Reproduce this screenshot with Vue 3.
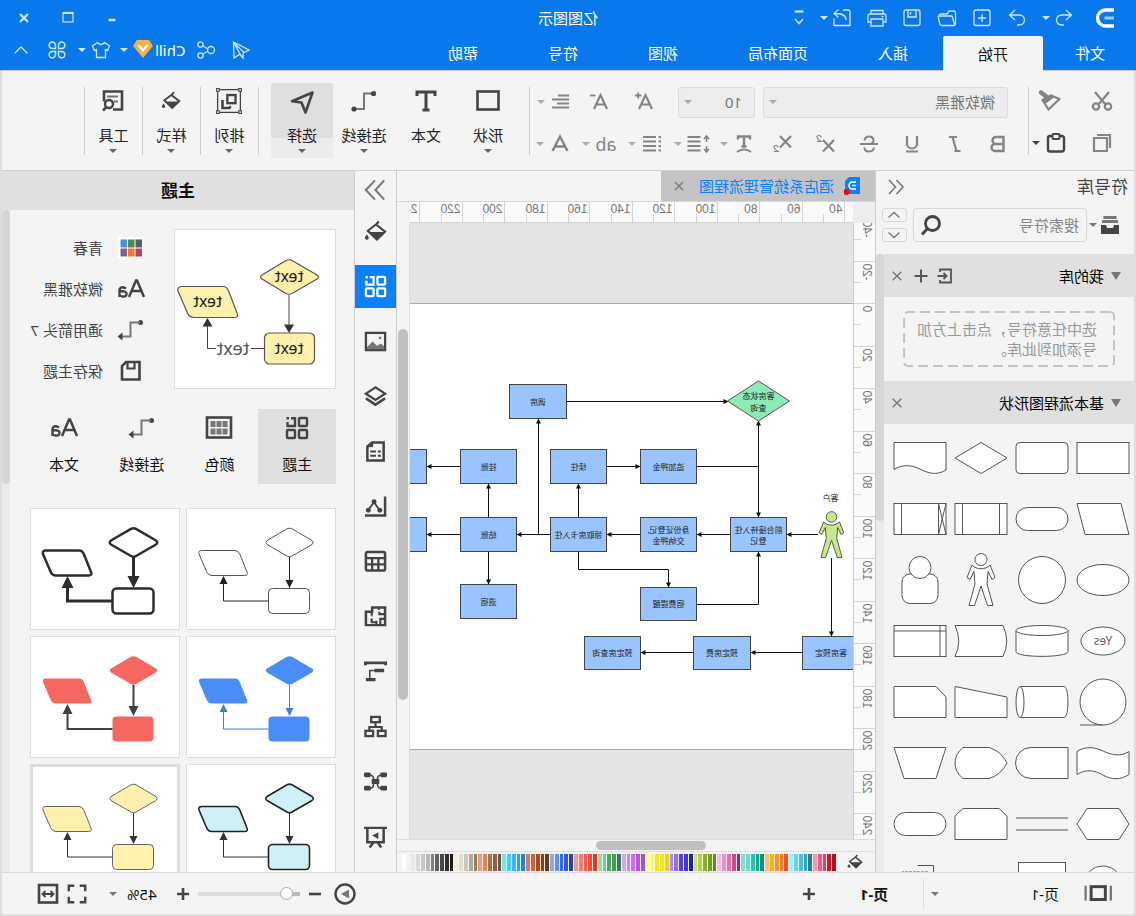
<script setup>
import { computed, h, onBeforeUnmount, onMounted, ref } from 'vue'

const paths = {
  undo: '<path d="M10 4 4.500 9l5.500 5M5 9h9.500a4.800 4.800 0 0 1 0 10H12"/>',
  redo: '<path d="M14 4l5.500 5-5.500 5M19 9H9.500a4.800 4.800 0 0 0 0 10H12"/>',
  create: '<rect x="4" y="4" width="16" height="15.500" rx="2"/><path d="M12 8v8M8 12h8"/>',
  open: '<path d="M3.500 18V7q0-2 2-2H10l2 3h6q2 0 2 2M3.500 18q0 1.500 1.500 1.500h12.500q1.300 0 1.600-1.300L20.800 11q.2-1-1-1H8Q7 10 6.500 11L5 17q-.5 1.500-1.500 1"/>',
  save: '<path d="M4 6q0-2 2-2h12q2 0 2 2v11.500q0 2-2 2H6q-2 0-2-2ZM8 4v7h8V4M13.500 6v2.500"/>',
  print: '<path d="M6 8V4.500h12V8M6 16H3V10q0-2 2-2h14q2 0 2 2v6h-3M6 13h12v7H6ZM5.500 10.500h2"/>',
  exportIcon: '<path d="M11 4H6Q4 4 4 6v13.500h16v-7M8 14c0-5 4-6.500 11-6.500M15.500 3.500l4.500 4-4.500 4"/>',
  more: '<path d="M7.500 5.500h9" stroke-width="2.200"/><path d="M8 13l4 4.500 4-4.500" stroke-width="1.600"/>',
  send: '<path d="M19.500 4 4 12l5 2.500L19 5l-6 11 6 4ZM10 15v5l3-3.500"/>',
  share: '<circle cx="7" cy="12" r="3.500"/><circle cx="17.500" cy="6.500" r="2.600"/><circle cx="17.500" cy="17.500" r="2.600"/><path d="M10 11l5-3M10 13l5 3"/>',
  shirt: '<path d="M8.500 4.500 3.500 8l2 4.500L7.500 11.500v8h9v-8l2 1 2-4.500-5-3.500q-3.500 4-7 0Z"/>',
  clover: '<path d="M10.500 10.500H7.500a3.200 3.200 0 1 1 3-3ZM13.500 10.500h3a3.200 3.200 0 1 0-3-3ZM10.500 13.500H7.500a3.200 3.200 0 1 0 3 3ZM13.500 13.500h3a3.200 3.200 0 1 1-3 3Z" stroke-width="1.500"/>',
  chevUp: '<path d="M5.500 15.500 12 9l6.500 6.500"/>',
  chevDown: '<path d="M6.500 9.500 12 14.500l5.500-5"/>',
  chevUpS: '<path d="M6.500 14.500 12 9.500l5.500 5"/>',
  min: '<path d="M8.500 14h7" stroke-width="2.500"/>',
  max: '<rect x="7" y="6.500" width="10" height="9.500" stroke-width="1.200"/><path d="M7 7h10" stroke-width="2"/>',
  close: '<path d="M8 8l8 8M16 8l-8 8"/>',
  cut: '<path d="M5 3l10.500 12.500M19 3 8.500 15.500" stroke-width="2.200"/><circle cx="6" cy="17.500" r="3.200" stroke-width="2.200"/><circle cx="18" cy="17.500" r="3.200" stroke-width="2.200"/>',
  painter: '<path d="M2.500 10 11 6.500 19.500 11 13.500 20.500Z" stroke-width="2.200" stroke-linejoin="round"/><path d="M10.500 6 19.500 11.500 16.500 14 8.500 8Z" fill="currentColor"/><path d="M21 3.500 14.500 8.500" stroke-width="4.500" stroke-linecap="round"/>',
  copy: '<path d="M7 7h13v13H7Z" stroke-width="2.200"/><path d="M4 17V4h13" stroke-width="2.200"/>',
  paste: '<rect x="4" y="5" width="16" height="15.500" rx="2" stroke-width="2.400"/><rect x="8.500" y="3" width="7" height="5" rx="1" fill="#f4f4f4" stroke-width="2"/>',
  grow: '<path d="M5 19 11.500 5 18 19M7.500 14.500h8" stroke-width="2.200"/><path d="M15.500 5.500h6.500M18.800 2.500v6" stroke-width="1.800"/>',
  shrink: '<path d="M5 19 11.500 5 18 19M7.500 14.500h8" stroke-width="2.200"/><path d="M16.500 5.500h5.500" stroke-width="1.800"/>',
  alignC: '<path d="M4 5.500h11M4 9.500h17M4 13.500h12M4 17.500h17" stroke-width="2"/>',
  bold: '<path d="M6.500 5h7.500a3.300 3.300 0 0 1 0 7H7.500h7.500a3.500 3.500 0 0 1 0 7H6.500Z" stroke-width="2.400"/>',
  italic: '<path d="M10 5h8M6.500 19h6M14.500 5l-4 14" stroke-width="2.200"/>',
  underline: '<path d="M7 4v7.500a5 5 0 0 0 10 0V4M6 19.500h12" stroke-width="2.200"/>',
  strike: '<path d="M3 12h18M16.500 8.500Q16 4.500 12 4.500T7.500 8t4.500 4M7 15.500q.5 4 5 4t4.500-4" stroke-width="2"/>',
  sup: '<path d="M4 8l11 11.500M15 8 4 19.500" stroke-width="2.200"/><path d="M17 5.500q0-2 2-2t2 1.800Q21 6.500 17 9.500h4.200" stroke-width="1.200"/>',
  sub: '<path d="M4 4l11 11.500M15 4 4 15.500" stroke-width="2.200"/><path d="M17 15.500q0-2 2-2t2 1.800q0 1.200-4 4.200h4.200" stroke-width="1.200"/>',
  textArc: '<path d="M6 7.500V4.500h12v3M12 4.500v10M9.500 14.500h5" stroke-width="2.400"/><path d="M5 20q7-5 14 0" stroke-width="2"/>',
  spacing: '<path d="M9.500 5h13M9.500 9.500h13M9.500 14h13M9.500 18.500h13" stroke-width="2.200"/><path d="M3.500 5v5M1 7l2.500-3L6 7M3.500 19v-5M1 17l2.500 3L6 17" stroke-width="1.600"/>',
  list: '<path d="M8 5h13M8 9.500h13M8 14h13M8 18.500h13" stroke-width="2.200"/><path d="M3 5h2.500M3 9.500h2.500M3 14h2.500M3 18.500h2.500" stroke-width="2.200"/>',
  fontColor: '<path d="M4.500 19 12 4.500 19.500 19M7 14.500h10" stroke-width="2.400"/>',
  square: '<rect x="1.500" y="2.500" width="21" height="18" stroke-width="2.600"/>',
  text: '<path d="M3 7V3h18v4M12 3v18M8.500 21h7" stroke-width="3"/>',
  connector: '<path d="M3 4.500h9V20H21" stroke-width="2" stroke="#777"/><circle cx="2.500" cy="4.500" r="2.600" fill="currentColor" stroke="none"/><circle cx="22" cy="20" r="2.600" fill="currentColor" stroke="none"/>',
  pointer: '<path d="M1.500 3.500 22 12.200 12.500 13.500 8.500 23.500Z" stroke-width="2.600" stroke-linejoin="round"/>',
  arrange: '<rect x="1.500" y="1.500" width="21" height="21" stroke-width="1.200"/><rect x="6" y="6.500" width="7.500" height="7.500" stroke-width="2.200"/><path d="M11 18.500h7V11" stroke-width="2.400"/><path d="M11 16.500v2.500" stroke-width="2"/><g fill="#f4f4f4" stroke-width="1"><rect x=".5" y=".5" width="2.500" height="2.500"/><rect x="21" y=".5" width="2.500" height="2.500"/><rect x=".5" y="21" width="2.500" height="2.500"/><rect x="21" y="21" width="2.500" height="2.500"/></g>',
  fill: '<path d="M8.500 1.500l3 3.200M11.500 4.700 2 12.200l8.500 8.300 9.500-9.300Z" stroke-width="2.200"/><path d="M2 12.500h17.500L10.500 21Z" fill="currentColor" stroke="none"/><path d="M21 15q2 2.500 2 3.500a2 2 0 0 1-4 0q0-1 2-3.500Z" fill="currentColor" stroke="none"/>',
  tool: '<path d="M12 20.500H3V2.500h18v10" stroke-width="2.600"/><path d="M7 7.500h11M7 12.500h4" stroke="#777" stroke-width="2"/><circle cx="16" cy="15" r="4" stroke-width="2.400"/><path d="M18.500 18 22 21.500" stroke-width="2.600"/>',
  dblLeft: '<path d="M11.500 5 5 12l6.500 7M19 5l-6.500 7L19 19" stroke-width="1.600"/>',
  dblRight: '<path d="M2 1.500 11.500 12 2 22.500M12 1.500 22 12 12 22.500" stroke-width="2.200"/>',
  library: '<path d="M5.500 4.500h13M4 8.500h16" stroke-width="3" stroke="#777"/><path d="M3 12h5l1 3h6l1-3h5v9H3Z" fill="currentColor" stroke="none"/>',
  search: '<circle cx="10.500" cy="10.500" r="7" stroke-width="2.800"/><path d="M15.500 15.500 21 21.500" stroke-width="3"/>',
  importIcon: '<path d="M17 8V5.500H6v13H17V16" stroke-width="1.800"/><path d="M19.500 12H11M13.500 9 10.500 12l3 3" stroke-width="1.800"/>',
  plus: '<path d="M12 5.500v13M5.500 12h13" stroke-width="2"/>',
  plusB: '<path d="M12 6v12M6 12h12" stroke-width="2.600"/>',
  minusB: '<path d="M6 12h12" stroke-width="2.600"/>',
  theme: '<rect x="2" y="2" width="8" height="8" rx="1" stroke-width="2.400"/><path d="M18 2.200h-4V10h7.500V6" stroke-width="2.400"/><rect x="20" y="1" width="2.500" height="2.500" fill="currentColor" stroke="none"/><rect x="2" y="14" width="8" height="8" rx="1" stroke-width="2.400"/><rect x="14" y="14" width="8" height="8" rx="1" stroke-width="2.400"/>',
  image: '<rect x="2" y="3" width="20" height="18" stroke-width="2.400"/><path d="M3 20v-3l3.500-3 4 2.500L15 12l6 6v2Z" fill="#777" stroke="none"/><rect x="6" y="7" width="2.500" height="2.500" fill="#777" stroke="none"/>',
  layers: '<path d="M12 2.500 22 9l-10 6.500L2 9Z" stroke-width="2.400"/><path d="M2 14l10 6.500L22 14" stroke-width="2.600"/>',
  page: '<path d="M3.500 2.500h12l5 4v15h-17Z" stroke-width="2.600"/><path d="M15 2.500 20.500 7H15Z" fill="currentColor" stroke-width="1"/><path d="M6.500 12h3M11.500 12h6M6.500 16.500h3M11.500 16.500h6" stroke-width="2"/>',
  chart: '<path d="M2 1.500V21.500H23" stroke-width="2.600"/><path d="M8 15.500 13.500 7.500l6 8" stroke-width="1.800"/><circle cx="7.500" cy="16" r="2.600" fill="currentColor" stroke="none"/><circle cx="13.500" cy="7" r="2.600" fill="currentColor" stroke="none"/><circle cx="19.500" cy="16" r="2.600" fill="currentColor" stroke="none"/>',
  table: '<rect x="2" y="2" width="20" height="19.500" rx="2" stroke-width="2.600"/><path d="M2 8.500h20M2 15h20M9 8.500v13M15.500 8.500v13" stroke-width="2.400"/>',
  plan: '<path d="M2 21V2.500h13.500V7H22v14Z" stroke-width="2.600"/><path d="M2 9.500h6V7M8.500 2v3M2 14.500h5v7M11 21v-4.500M16 7v4M16 11h-1M16 14v4h-4" stroke-width="2.200"/>',
  gantt: '<path d="M1.500 5.500V3h21v2.500" stroke-width="3"/><path d="M8 11h10v9" stroke-width="1.600"/><path d="M3 11h10M12 20.500h10" stroke-width="3.600"/>',
  org: '<rect x="7.500" y="2" width="9" height="5.500" stroke-width="2.400"/><rect x="1.500" y="16.500" width="8" height="5.500" stroke-width="2.400"/><rect x="14.500" y="16.500" width="8" height="5.500" stroke-width="2.400"/><path d="M12 7.500V12M5.500 16v-3.500h13V16" stroke-width="2.200"/>',
  mind: '<g fill="currentColor" stroke="none"><rect x="0" y="2.500" width="7" height="5" rx="1.500"/><rect x="17" y="2.500" width="7" height="5" rx="1.500"/><rect x="0" y="16.500" width="7" height="5" rx="1.500"/><rect x="17" y="16.500" width="7" height="5" rx="1.500"/><rect x="8" y="9.500" width="8" height="5" rx="1"/></g><path d="M6 5.500q4 0 4 4v5q0 4.500-4 4.500M18 5.500q-4 0-4 4v5q0 4.500 4 4.500" stroke-width="1.600"/>',
  present: '<path d="M0 3h24M3.500 4v14h17V4M9.500 18.500 6 23.500M14.500 18.500l3.500 5" stroke-width="2.600"/><path d="M9 7.500l6.500 3.500L9 14.500Z" fill="currentColor" stroke="none"/>',
  aa: '<path d="M-1 20 6 3.500h1L14 20M2 14h9" stroke-width="2.500"/><path d="M17 11.500q5-3 6.500 1V20M23.500 14.500q-7.500-1-7 3 .5 2.500 4 2t3-3" stroke-width="2.400"/>',
  elbow: '<circle cx="2.500" cy="4.500" r="2.500" fill="currentColor" stroke="none"/><path d="M3 4.500h9.500V18.500H21" stroke="#777" stroke-width="2"/><path d="M20.500 14.500l5 4-5 4Z" fill="currentColor" stroke="none"/>',
  disk: '<path d="M3.500 3H17l4 4v13.500H3.500Z" stroke-width="2.600"/><path d="M8.500 3v6.500h7V3" stroke-width="2.200"/>',
  palette: '<rect x="0" y="1.500" width="24" height="20" fill="none" stroke-width="2.600"/><g fill="#777" stroke="none"><rect x="3.500" y="5" width="5" height="6"/><rect x="9.500" y="5" width="5" height="6"/><rect x="15.500" y="5" width="5" height="6"/><rect x="3.500" y="12.500" width="5" height="6"/><rect x="9.500" y="12.500" width="5" height="6"/><rect x="15.500" y="12.500" width="5" height="6"/></g>',
  swatch: '<rect x="-1" y="1" width="26" height="21" fill="#fff" stroke="none"/><g stroke="none"><rect x="1" y="3.500" width="6.500" height="8" fill="#565f62"/><rect x="8.500" y="3.500" width="6.500" height="8" fill="#508a57"/><rect x="16" y="3.500" width="6.500" height="8" fill="#4a90e2"/><rect x="1" y="12.500" width="6.500" height="8" fill="#b73e63"/><rect x="8.500" y="12.500" width="6.500" height="8" fill="#f5772b"/><rect x="16" y="12.500" width="6.500" height="8" fill="#7d6088"/></g>',
  pages: '<rect x="4" y="4" width="15.500" height="14" stroke-width="3.200"/><path d="M-2 3v16M25.500 3v16" stroke="#777" stroke-width="2.500"/>',
  play: '<circle cx="12" cy="12" r="9.500" stroke-width="2.400"/><path d="M8 12l8-4.500v9Z" transform="matrix(-1 0 0 1 24 0)" fill="#777" stroke="none"/>',
  full: '<path d="M3 9V3H9M15 3h6V9M21 15v6H15M9 21H3V15" stroke-width="2.600"/>',
  fit: '<rect x="3" y="3" width="18" height="17.500" stroke-width="2.600"/><path d="M7 12h10M9.500 9 6.500 12l3 3M14.500 9l3 3-3 3" stroke-width="1.800"/>'
}

const Icon = (props) =>
  h('svg', {
    viewBox: '0 0 24 24',
    width: props.size || 24,
    height: props.size || 24,
    fill: 'none',
    stroke: 'currentColor',
    'stroke-width': 1.3,
    'aria-hidden': 'true',
    class: 'icon',
    innerHTML: paths[props.name]
  })
Icon.props = ['name', 'size']

const menuTabs = ['文件', '开始', '插入', '页面布局', '视图', '符号', '帮助']
const plainFormats = [
  ['bold', '加粗'], ['italic', '斜体'], ['underline', '下划线'],
  ['strike', '删除线'], ['sup', '上标'], ['sub', '下标']
]
const bigTools = [
  { label: '形状', icon: 'square', caret: true },
  { label: '文本', icon: 'text', caret: false },
  { label: '连接线', icon: 'connector', caret: true },
  { label: '选择', icon: 'pointer', caret: true, on: true }
]
const sideTools = [
  { label: '排列', icon: 'arrange', size: 26 },
  { label: '样式', icon: 'fill', size: 20 },
  { label: '工具', icon: 'tool', size: 24 }
]
const rail = ['fill', 'theme', 'image', 'layers', 'page', 'chart', 'table', 'plan', 'gantt', 'org', 'mind', 'present']

const person = '<circle cx="0" cy="-20.500" r="6"/><path d="M-9-15-14-2.500-11-.5-7-8.500-6 4-12 25.500H-6.500L0 6 6.500 25.500H12L6 4 7-8.500 11-.5 14-2.500 9-15C5-10-5-10-9-15Z"/>'
const R = '<rect x="-26" y="-15.500" width="52" height="31"/>'
const pill = '<rect x="-26" y="-11.500" width="52" height="23" rx="11.500"/>'
const symbols = [
  R,
  '<rect x="-26" y="-15.500" width="52" height="31" rx="4"/>',
  '<path d="M0-15.500 26 0 0 15.500-26 0Z"/>',
  '<path d="M-26-15.500H26V11.500C18 6 8 7 0 11S-16 18-26 12Z"/>',
  '<path d="M-18-15.500H26L18 15.500H-26Z"/>',
  pill,
  R + '<path d="M-18.500-15.500v31M18.500-15.500v31"/>',
  R + '<path d="M-18.500-15.500v31M18.500-15.500v31M-26-15.500l7.500 31M-18.500-15.500l-7.500 31"/>',
  '<ellipse rx="26" ry="15.500"/>',
  '<circle r="23.500"/>',
  person,
  '<rect x="-18" y="-6" width="36" height="29.500" rx="8"/><circle cy="-12.500" r="11"/>',
  '<ellipse rx="22" ry="14"/>',
  '<path d="M-26-10.500V10.500C-26 17 26 17 26 10.500V-10.500"/><ellipse cy="-10.500" rx="26" ry="5"/>',
  '<path d="M-22-15.500H26Q18.500 0 26 15.500H-22Q-29.500 0-22-15.500Z"/>',
  R + '<path d="M-20-15.500v31M-26-10H26"/>',
  '<circle r="23"/><path d="M0 23H23"/>',
  '<path d="M22-15.500H-22C-27.300-15.500-27.300 15.500-22 15.500H22"/><ellipse cx="22" rx="4" ry="15.500"/>',
  '<path d="M-26-5 26-15.500V15.500H-26Z"/>',
  '<path d="M-16-15.500H26V15.500H-26V-5Z"/>',
  '<path d="M-26-11.500C-18-6-8-8 0-12S18-17 26-11.500V11.500C18 6 8 7 0 12S-18 17-26 11.500Z"/>',
  '<path d="M-26-15.500H11a15.500 15.500 0 0 1 0 31H-26Z"/>',
  '<path d="M-8-15.500H18Q26-9 26 0T18 15.500H-8Q-20 12-26 0-20-12-8-15.500Z"/>',
  '<path d="M-26-15.500H26L16 15.500H-16Z"/>',
  '<path d="M-16-15.500H16L26 0 16 15.500H-16L-26 0Z"/>',
  '<path d="M-26-6H26M-26 6H26"/>',
  '<path d="M-18-15.500H18L26-8V15.500H-26V-8Z"/>',
  pill,
  '<circle r="19"/>',
  '<rect x="-23.500" y="-22.500" width="47" height="40"/>',
  '',
  '<path d="M2.500-19.500H-13.500V0" fill="none"/><path d="M-8-13.500H18" fill="none" stroke-dasharray="3 1" opacity=".5"/>'
]

const view = ref({ w: window.innerWidth, h: window.innerHeight })
const measure = () => { view.value = { w: window.innerWidth, h: window.innerHeight } }
onMounted(() => window.addEventListener('resize', measure))
onBeforeUnmount(() => window.removeEventListener('resize', measure))

const ticks = (count, first, start) =>
  Array.from({ length: Math.max(0, count) }, (_, i) => ({ v: first + 20 * i, p: Math.round(start + 42.5 * i) + 0.5 }))
const hTicks = computed(() => ticks(Math.ceil((view.value.w - 700) / 42.5), 40, 7.5))
const vTicks = computed(() => ticks(Math.ceil((view.value.h - 300) / 42.5), -40, -5))

const nodes = [
  { x: 569.5, y: 384.5, w: 57, h: 34, t: ['调房'] },
  { x: 439.5, y: 449.5, w: 56, h: 34, t: ['追加押金'] },
  { x: 529.5, y: 449.5, w: 56, h: 34, t: ['续住'] },
  { x: 619.5, y: 449.5, w: 56, h: 34, t: ['挂账'] },
  { x: 709.5, y: 449.5, w: 56, h: 34, t: ['应收款'] },
  { x: 349.5, y: 517.5, w: 56, h: 34, t: ['前台接待入住', '登记'] },
  { x: 439.5, y: 517.5, w: 56, h: 34, t: ['身份证登记,', '交纳押金'] },
  { x: 529.5, y: 517.5, w: 56, h: 34, t: ['领取房卡入住'] },
  { x: 619.5, y: 517.5, w: 56, h: 34, t: ['结账'] },
  { x: 709.5, y: 517.5, w: 56, h: 34, t: [] },
  { x: 619.5, y: 584.5, w: 56, h: 34, t: ['退宿'] },
  { x: 439.5, y: 587.5, w: 56, h: 33, t: ['宿费提醒'] },
  { x: 276.5, y: 636.5, w: 57, h: 33, t: ['客房预定'] },
  { x: 385.5, y: 636.5, w: 57, h: 33, t: ['预定房费'] },
  { x: 495.5, y: 636.5, w: 56, h: 33, t: ['预定房查询'] }
]
const links = [
  'M569.500 401.500H408', 'M377.500 500V421', 'M377.500 440V517', 'M529.500 466.500H496',
  'M557.500 517V484', 'M585.500 534.500H619', 'M597.500 534.500V419', 'M405.500 534.500H439',
  'M495.500 534.500H529', 'M318 534.500H349', 'M647.500 517V484', 'M647.500 552V584',
  'M675.500 466.500H709', 'M675.500 534.500H709', 'M557.500 552V569.500H467.500V587',
  'M439.500 604.500H377.500V552', 'M304.500 558V636', 'M333.500 652.500H385', 'M442.500 652.500H495'
]

const themes = [
  { f: '#fff', s: '#555', w: 1, l: '#222', lw: 1, a: 4 },
  { f: '#fff', s: '#2d2d2d', w: 2.5, l: '#2d2d2d', lw: 3, a: 6 },
  { f: '#4a8df8', s: '#4a8df8', w: 0, l: '#3f7de0', lw: 1, a: 4 },
  { f: '#f5675f', s: '#f5675f', w: 0, l: '#404040', lw: 2, a: 5 },
  { f: '#cff0f6', s: '#222', w: 1.6, l: '#333', lw: 1, a: 4 },
  { f: '#fff0ad', s: '#666', w: 1, l: '#333', lw: 1, a: 4, on: true }
]
const themeTabs = [['theme', '主题'], ['palette', '颜色'], ['elbow', '连接线'], ['aa', '文本']]
const themeProps = [['swatch', '青春'], ['aa', '微软雅黑'], ['elbow', '通用箭头 7'], ['disk', '保存主题']]

const colors = (
  'b01022 d6102c ef3a5c f7577f f995ab 24808f 37a5bb 3cc3dc 5cd8ee a8eefa f4511e ff7a28 ff9020 ffb010 ffc468 ' +
  '0d9080 12a88c 1bcaae 66ddc8 7ee0d0 9e2a5c c94a8c e96aaf fa88d0 f0c0dc 5c8c10 74a020 88b020 b4d048 cfe080 ' +
  '2020b0 4038d8 6038f0 8c70f8 a890f8 ffcc00 ffe010 f0e820 ffff40 ffff80 a050e0 c050e8 d068f8 c088ff dca0ff ' +
  '348048 40a050 4caa60 78c890 98d8a8 f03020 ff4838 ff5850 ff7870 ff9488 2048a8 3058e0 2e6cf8 6090ff 80aaff ' +
  '783800 983c00 b04820 d06040 e07858 1888d8 28a0f8 40b0ff 38d0ff 68e8ff 785038 946040 b07050 d88860 f89870 ' +
  '888070 b0a890 ccc8b8 e4dccc f4eedc 181818 303030 484848 606060 808080 b8b8b8 c8c8c8 d8d8d8 e8e8e8 f2f2f2 ffffff'
).split(' ')

const zoom = ref(8)
const query = ref('')
</script>

<template>
  <div class="app">
    <header>
      <div class="titlebar">
        <div class="quick">
          <svg class="logo" viewBox="0 0 20 20" width="20" height="20"><path d="M1 2H10a8 8 0 0 0 0 16H19" transform="matrix(-1 0 0 1 20 0)" fill="none" stroke="none" /><path d="M1 2H9.500a8 8 0 0 1 0 16H1" fill="none" stroke="#fff" stroke-width="3.400" /><path d="M1 10H10.500" stroke="#9ccafc" stroke-width="3" /></svg>
          <button aria-label="撤销"><Icon name="undo" /></button>
          <span class="caret"></span>
          <button aria-label="重做"><Icon name="redo" /></button>
          <button aria-label="新建"><Icon name="create" /></button>
          <button aria-label="打开"><Icon name="open" /></button>
          <button aria-label="保存"><Icon name="save" /></button>
          <button aria-label="打印"><Icon name="print" /></button>
          <button aria-label="导出"><Icon name="exportIcon" /></button>
          <span class="caret"></span>
          <button class="narrow" aria-label="更多"><Icon name="more" /></button>
        </div>
        <h1>亿图图示</h1>
        <div class="win">
          <button aria-label="最小化"><Icon name="min" /></button>
          <button aria-label="最大化"><Icon name="max" /></button>
          <button class="x" aria-label="关闭"><Icon name="close" /></button>
        </div>
      </div>
      <div class="menubar">
        <nav>
          <button v-for="t in menuTabs" :key="t" :class="{ on: t === '开始' }">{{ t }}</button>
        </nav>
        <div class="account">
          <button aria-label="发送"><Icon name="send" /></button>
          <button class="gap" aria-label="分享"><Icon name="share" /></button>
          <span class="user">Chill</span>
          <svg class="vip" viewBox="0 0 20 18" width="20" height="18"><path d="M4 0h12l4 6-10 12L0 6Z" fill="#f7b140" /><path d="M5.500 5 10 10.500 14.500 5" fill="none" stroke="#fff" stroke-width="2.200" /></svg>
          <span class="caret"></span>
          <button class="skin" aria-label="皮肤"><Icon name="shirt" /></button>
          <span class="caret near"></span>
          <button class="apps" aria-label="应用"><Icon name="clover" /></button>
          <button class="fold" aria-label="折叠"><Icon name="chevUp" /></button>
        </div>
      </div>
    </header>

    <div class="body">
      <section class="ribbon">
        <div class="clip">
          <button class="g" aria-label="剪切"><Icon name="cut" /></button>
          <button class="g" aria-label="格式刷"><Icon name="painter" /></button>
          <button class="g" aria-label="复制"><Icon name="copy" /></button>
          <button class="pasteb" aria-label="粘贴"><Icon name="paste" /><span class="caret"></span></button>
        </div>
        <i class="sep"></i>
        <div class="font">
          <div class="row one">
            <label class="box family"><select aria-label="字体"><option>微软雅黑</option></select><span class="caret"></span></label>
            <label class="box size"><select aria-label="字号"><option>10</option></select><span class="caret"></span></label>
            <button aria-label="增大字号"><Icon name="grow" /></button>
            <button aria-label="减小字号"><Icon name="shrink" /></button>
            <button class="pair last" aria-label="对齐"><Icon name="alignC" /><span class="caret"></span></button>
          </div>
          <div class="row two">
            <button v-for="f in plainFormats" :key="f[0]" :aria-label="f[1]"><Icon :name="f[0]" /></button>
            <button class="pair first" aria-label="文字效果"><Icon name="textArc" /><span class="caret"></span></button>
            <button class="pair" aria-label="行距"><Icon name="spacing" /><span class="caret"></span></button>
            <button class="pair" aria-label="项目符号"><Icon name="list" /><span class="caret"></span></button>
            <button class="pair"><span class="ab">ab</span><span class="caret"></span></button>
            <button class="pair" aria-label="字体颜色"><Icon name="fontColor" /><span class="caret"></span></button>
          </div>
        </div>
        <i class="sep"></i>
        <div class="bigs">
          <button v-for="b in bigTools" :key="b.label" class="big" :class="{ on: b.on }">
            <span class="pic"><Icon :name="b.icon" size="24" /></span>
            <span>{{ b.label }}</span>
            <span v-if="b.caret" class="caret"></span>
          </button>
        </div>
        <i class="sep"></i>
        <template v-for="b in sideTools" :key="b.label">
          <button class="big slim">
            <span class="pic"><Icon :name="b.icon" :size="b.size" /></span>
            <span>{{ b.label }}</span>
            <span class="caret"></span>
          </button>
          <i class="sep"></i>
        </template>
      </section>

      <main>
        <aside class="library">
          <div class="libhead"><h2>符号库</h2><button aria-label="收起"><Icon name="dblLeft" /></button></div>
          <div class="find">
            <button class="lib" aria-label="符号库菜单"><Icon name="library" /><span class="caret"></span></button>
            <label class="search"><input v-model="query" type="text" placeholder="搜索符号" aria-label="搜索符号"><Icon name="search" /></label>
            <div class="steps">
              <button aria-label="上一个"><Icon name="chevUpS" /></button>
              <button aria-label="下一个"><Icon name="chevDown" /></button>
            </div>
          </div>
          <div class="libbody">
            <div class="libscroll">
              <div class="sec"><b class="tri"></b><h3>我的库</h3>
                <button aria-label="导入"><Icon name="importIcon" /></button>
                <button aria-label="添加"><Icon name="plus" /></button>
                <button class="dim" aria-label="关闭我的库"><Icon name="close" size="26" /></button>
              </div>
              <div class="drop">
                <svg class="dash" width="100%" height="100%"><rect x="1" y="1" width="99%" height="54" rx="4" fill="none" stroke="#c4c4c4" stroke-width="2" stroke-dasharray="10 5" /></svg>
                <p>选中任意符号，点击上方加号添加到此库。</p>
              </div>
              <div class="sec"><b class="tri"></b><h3>基本流程图形状</h3>
                <button class="dim" aria-label="关闭基本流程图形状"><Icon name="close" size="26" /></button>
              </div>
              <div class="shapes">
                <svg v-for="(s, i) in symbols" :key="i" viewBox="-30 -30 61 61" width="61" height="61" fill="#fff" stroke="#555" stroke-width="1">
                  <g v-html="s"></g>
                  <text v-if="i === 12" y="4" text-anchor="middle" class="yes">Yes</text>
                </svg>
              </div>
            </div>
            <div class="track"><i></i></div>
          </div>
        </aside>

        <section class="center">
          <div class="doctabs">
            <div class="doctab">
              <svg viewBox="0 0 16 20" width="16" height="20"><path d="M0 1h11l4 4v13H0Z" fill="#0a80ff" /><path d="M4 6h3.500a3.500 3.500 0 0 1 0 7H4M4 9.500h4" fill="none" stroke="#fff" stroke-width="1.600" /><circle cx="13.500" cy="16" r="3" fill="#f00" /></svg>
              <span>酒店系统管理流程图</span>
              <button aria-label="关闭文档"><Icon name="close" /></button>
            </div>
          </div>
          <div class="work">
            <div class="corner"></div>
            <svg class="hruler" width="100%" height="21">
              <g v-for="t in hTicks" :key="t.v">
                <path :d="`M${t.p} 0V20M${t.p + 21} 12V20`" stroke="#d4d4d4" />
                <text :x="t.p + 2" y="11">{{ t.v }}</text>
              </g>
            </svg>
            <div class="blank"></div>
            <svg class="vruler" width="22" height="100%">
              <g v-for="t in vTicks" :key="t.v">
                <path :d="`M0 ${t.p}H22M14 ${t.p + 21}H22`" stroke="#d4d4d4" />
                <text :transform="`translate(12 ${t.p + 2}) rotate(-90)`" text-anchor="end">{{ t.v }}</text>
              </g>
            </svg>
            <div class="canvas">
              <div class="paper">
                <svg class="chart" viewBox="283 304 443 445" width="443" height="445">
                  <defs><marker id="tip" viewBox="0 0 6 6" refX="5.500" refY="3" markerWidth="6" markerHeight="6" orient="auto"><path d="M1 .5 6 3 1 5.500Z" fill="#111" /></marker></defs>
                  <path v-for="l in links" :key="l" :d="l" fill="none" stroke="#111" marker-end="url(#tip)" />
                  <path d="M439.500 466.500H377.500M377.500 430V500" stroke="#111" fill="none" />
                  <g v-for="(n, i) in nodes" :key="i">
                    <rect :x="n.x" :y="n.y" :width="n.w" :height="n.h" fill="#99c4ff" stroke="#444" />
                    <text v-for="(s, k) in n.t" :key="k" :x="n.x + n.w / 2" :y="n.y + n.h / 2 + 3 + (k * 11) - (n.t.length - 1) * 5" text-anchor="middle">{{ s }}</text>
                  </g>
                  <path d="M377.500 381 408.500 401 377.500 421 346.500 401Z" fill="#8debb8" stroke="#555" />
                  <text x="377.500" y="399" text-anchor="middle">客房状态</text>
                  <text x="377.500" y="411" text-anchor="middle">查询</text>
                  <g transform="translate(304.500 535) scale(.88)" fill="#c5e88a" stroke="#444" v-html="person"></g>
                  <text x="305.500" y="501" text-anchor="middle">客户</text>
                </svg>
              </div>
            </div>
            <div class="vbar"><i></i></div>
          </div>
          <div class="hbar"><i></i></div>
          <div class="strip">
            <Icon name="fill" size="16" />
            <div class="cells"><button v-for="c in colors" :key="c" :aria-label="c" :style="{ background: '#' + c }"></button></div>
          </div>
        </section>

        <div class="rail">
          <button class="fold" aria-label="展开"><Icon name="dblRight" size="22" /></button>
          <button v-for="r in rail" :key="r" :class="{ on: r === 'theme' }" :aria-label="r"><Icon :name="r" size="23" /></button>
        </div>

        <aside class="themes">
          <h2>主题</h2>
          <div class="tbody">
            <div class="tscroll">
              <div class="top">
                <svg class="preview" viewBox="0 0 160 158" width="160" height="158">
                  <g fill="#fff0ad" stroke="#555" stroke-width="1.200" stroke-linejoin="round">
                    <path d="M43 30.500Q46 29 49 30.500L73 45Q76 47 73 49L49 63.500Q46 65 43 63.500L18 49Q15 47 18 45Z" />
                    <path d="M112 56.500H153Q158 56.500 157 61L148 82Q146 87.500 141 87.500H100Q96 87.500 98 83L106 62Q108 56.500 112 56.500Z" />
                    <rect x="20.500" y="103" width="50" height="31" rx="5" />
                  </g>
                  <path d="M46 65V98M71 118.500H84M119 118.500H127.500V94" fill="none" stroke="#444" />
                  <path d="M46 103l-5-8.500h10ZM127.500 88l-5 8.500h10Z" fill="#333" />
                  <g text-anchor="middle" class="t1"><text x="46" y="52">text</text><text x="127.500" y="77">text</text><text x="46" y="124">text</text></g>
                  <text x="102" y="125" text-anchor="middle" class="t2">text</text>
                </svg>
                <div class="props">
                  <button v-for="p in themeProps" :key="p[1]"><Icon :name="p[0]" size="24" /><span>{{ p[1] }}</span></button>
                </div>
              </div>
              <div class="ttabs">
                <button v-for="(p, i) in themeTabs" :key="p[1]" :class="{ on: i === 0 }"><Icon :name="p[0]" size="24" /><span>{{ p[1] }}</span></button>
              </div>
              <div class="cards">
                <button v-for="(c, i) in themes" :key="i" :class="{ on: c.on }" :aria-label="'主题 ' + (i + 1)">
                  <svg viewBox="0 0 150 122" width="150" height="122">
                    <g :fill="c.f" :stroke="c.s" :stroke-width="c.w" stroke-linejoin="round">
                      <path d="M44 20.800Q46.500 19.500 49 20.800L69 32.500Q71.500 34.500 69 36.500L49 48Q46.500 49.500 44 48L24 36.500Q21.500 34.500 24 32.500Z" />
                      <path d="M101 42.500H134Q138 42.500 137 46L129.500 63.500Q128 67.500 124 67.500H91.500Q87.500 67.500 89 64L96 46.500Q97.500 42.500 101 42.500Z" />
                      <rect x="26.500" y="80.500" width="41" height="25" rx="4" />
                    </g>
                    <path :d="`M46.500 49V${80 - c.a}M67.500 93H112.500V${68 + c.a}`" fill="none" :stroke="c.l" :stroke-width="c.lw" />
                    <path :d="`M46.500 80l${-c.a} ${-c.a * 2}h${c.a * 2}ZM112.500 68l${-c.a} ${c.a * 2}h${c.a * 2}Z`" :fill="c.l" />
                  </svg>
                </button>
              </div>
            </div>
            <div class="track"><i></i></div>
          </div>
        </aside>
      </main>

      <footer>
        <button class="pg" aria-label="页面缩略图"><Icon name="pages" size="22" /></button>
        <button class="pagesel">页-1<span class="caret"></span></button>
        <i class="vsep"></i>
        <button class="cur">页-1</button>
        <button aria-label="新增页面"><Icon name="plusB" /></button>
        <div class="zoombar">
          <button aria-label="播放"><Icon name="play" /></button>
          <button aria-label="缩小"><Icon name="minusB" /></button>
          <input v-model="zoom" type="range" min="0" max="100" aria-label="缩放">
          <button aria-label="放大"><Icon name="plusB" /></button>
          <button class="pct">45%<span class="caret"></span></button>
          <button aria-label="全屏"><Icon name="full" size="22" /></button>
          <button aria-label="适应宽度"><Icon name="fit" /></button>
        </div>
      </footer>
    </div>
  </div>
</template>

<style>
body { margin: 0; overflow: hidden; }
</style>

<style scoped>
.app {
  height: 100vh; display: flex; flex-direction: column; transform: scaleX(-1);
  font: 15px/20px "Noto Sans", "Noto Sans CJK SC", sans-serif; color: #222; background: #f4f4f4; overflow: hidden;
}
.app * { box-sizing: border-box; }
.icon { display: block; flex: none; overflow: visible; }
button { border: 0; padding: 0; margin: 0; background: none; font: inherit; color: inherit; display: flex; align-items: center; justify-content: center; flex: none; }
h1, h2, h3, p { margin: 0; font-size: 15px; font-weight: 400; }
.caret { width: 10px; height: 4px; flex: none; display: flex; justify-content: center; }
.caret::before { content: ""; border: 4px solid transparent; border-top-color: currentColor; border-bottom: 0; }

header { flex: none; background: #0a78ed; color: #cfe5fd; }
.titlebar { height: 35px; display: grid; grid-template-columns: 1fr auto 1fr; align-items: center; }
.titlebar h1 { color: #fff; }
.quick { display: flex; align-items: center; gap: 13px; padding-left: 21px; }
.quick button { width: 22px; height: 24px; }
.quick .logo { margin-right: 7px; }
.quick .caret { margin-left: -11px; }
.quick .narrow { width: 14px; }
.win { display: flex; justify-content: flex-end; padding-right: 2px; }
.win button { width: 44px; height: 32px; }
.win .x svg { stroke-width: 2.2; }
.menubar { height: 36px; display: flex; justify-content: space-between; align-items: flex-end; border-bottom: 1px solid #ccc; }
nav { display: flex; color: #fff; }
nav button { padding: 0 35px; height: 34px; }
nav button:first-child { padding: 0 32px 0 31px; }
nav .on { background: #f4f4f4; color: #111; height: 35px; margin-bottom: -1px; border-radius: 2px 2px 0 0; }
.account { display: flex; align-items: center; padding: 0 10px 8px 0; }
.account button { width: 22px; }
.account .gap { margin-left: 13px; }
.user { margin-left: 10px; color: #fff; }
.vip { margin: 0 4px 2px 2px; }
.account .skin { margin-left: 7px; }
.account .near { margin-left: 3px; }
.account .apps { margin-left: 9px; }
.account .fold { margin-left: 14px; }

.body { flex: 1; min-height: 0; display: flex; flex-direction: column; border: solid #dedede; border-width: 0 2px 2px; }
.ribbon { flex: none; height: 100px; display: flex; border-bottom: 1px solid #d0d0d0; color: #848484; }
.clip { display: grid; grid-template: 42px 42px / 40px 43px; column-gap: 10px; padding: 8px 0 0 12px; }
.clip button { padding-top: 2px; }
.clip .pasteb { justify-content: flex-start; padding-left: 4px; gap: 3px; color: #444; }
.sep { width: 1px; height: 68px; margin-top: 16px; background: #ccc; flex: none; }
.font { padding: 10px 5px 0 18px; }
.row { display: flex; height: 42px; align-items: center; }
.row button { width: 24px; }
.one { padding-left: 2px; }
.one button { margin-left: 21px; }
.row .pair { width: 37px; gap: 3px; margin-left: 9px; justify-content: flex-start; }
.row .pair .caret, .box .caret { color: #aaa; }
.row .last { margin-left: 15px; }
.two button { margin-right: 19px; }
.two .pair { margin-right: 0; }
.two .first { margin-left: -4px; }
.ab { width: 24px; font-size: 18px; }
.box { display: flex; align-items: center; border: 1px solid #dcdcdc; border-radius: 3px; background: #ededed; height: 31px; padding: 0 4px 0 12px; }
.box select { flex: 1; min-width: 0; appearance: none; border: 0; background: none; font: inherit; color: #777; padding: 0; }
.family { width: 245px; margin-right: 8px; }
.size { width: 77px; }
.bigs { display: flex; padding: 0 12px 0 10px; }
.big { width: 62px; height: 75px; margin-top: 12px; flex-direction: column; justify-content: flex-start; color: #222; border-radius: 2px; }
.big.slim { width: 57px; }
.big.on { background: linear-gradient(#dfdfdf 55px, #ececec 55px); }
.pic { height: 34px; display: flex; align-items: center; color: #444; margin: 1px 0 7px; }
.big .caret { color: #666; margin-top: 4px; }

main { flex: 1; min-height: 0; display: flex; }
.library { width: 259px; flex: none; border-right: 1px solid #ccc; display: flex; flex-direction: column; min-height: 0; }
.libhead { height: 32px; display: flex; align-items: center; justify-content: space-between; padding: 0 8px 0 6px; color: #777; }
.libhead h2 { font-size: 17px; color: #444; }
.find { height: 51px; display: flex; align-items: flex-start; padding: 5px 6px 0 12px; color: #444; }
.lib { height: 34px; width: 35px; justify-content: flex-start; }
.lib .caret { color: #777; }
.search { flex: 1; min-width: 0; height: 34px; border: 1px solid #d8d8d8; border-radius: 3px; display: flex; align-items: center; padding: 0 5px 0 7px; margin-right: 6px; }
.search input { flex: 1; min-width: 0; border: 0; outline: 0; background: none; font: inherit; padding: 0; color: #444; }
.search input::placeholder { color: #888; }
.steps { display: grid; gap: 6px; }
.steps button { width: 25px; height: 14px; border: 1px solid #d8d8d8; border-radius: 3px; color: #777; }
.libbody, .tbody { flex: 1; min-height: 0; display: flex; }
.libscroll, .tscroll { flex: 1; min-width: 0; overflow: hidden; }
.track { width: 8px; background: #ebebeb; flex: none; }
.track i { display: block; height: 267px; background: #d6d6d6; border-radius: 4px; }
.sec { height: 43px; background: #e0e0e0; display: flex; align-items: center; padding: 0 1px 0 13px; color: #555; }
.sec button { width: 24px; }
.sec .dim { color: #777; }
.sec h3 { flex: 1; color: #000; }
.tri { border: 5px solid transparent; border-top: 8px solid #777; border-bottom: 0; margin-right: 7px; }
.drop { margin: 14px 19px; height: 56px; display: grid; }
.drop > * { grid-area: 1 / 1; }
.drop p { padding: 8px 12px 0 18px; color: #999; width: 212px; }
.shapes { display: grid; grid-template-columns: repeat(4, 61px); padding: 4px 0 0 1px; }
.yes { font-size: 12px; fill: #666; stroke: none; }

.center { flex: 1; min-width: 0; display: flex; flex-direction: column; }
.doctabs { height: 31px; border-bottom: 1px solid #d8d8d8; flex: none; }
.doctab { width: 214px; height: 30px; background: #c4c4c4; display: flex; align-items: center; padding: 0 6px 0 15px; color: #0a80ff; }
.doctab span { margin: 0 auto 0 10px; }
.doctab button { color: #777; }
.work { flex: 1; min-height: 0; display: grid; grid-template: 21px 1fr / 22px 1fr 13px; }
.corner { background: #ededed; }
.hruler, .vruler { display: block; background: #fafafa; overflow: hidden; }
.hruler { border-bottom: 1px solid #d4d4d4; }
.vruler { border-right: 1px solid #ccc; }
.hruler text, .vruler text { font-family: "Liberation Sans", sans-serif; font-size: 12px; fill: #777; }
.canvas { background: #e4e4e4; padding-top: 80px; overflow: hidden; min-width: 0; min-height: 0; }
.paper { background: #fff; border: solid #aaa; border-width: 1px 0; height: 447px; overflow: hidden; }
.chart { display: block; font-size: 8px; }
.chart text { fill: #222; }
.vbar { border-left: 1px solid #ddd; padding: 106px 1px 0; min-height: 0; overflow: hidden; }
.vbar i { display: block; width: 10px; height: 371px; border-radius: 5px; background: #c0c0c0; }
.hbar { height: 12px; flex: none; border-top: 1px solid #ddd; padding: 1px 0 0 169px; }
.hbar i { display: block; width: 110px; height: 9px; border-radius: 5px; background: #c0c0c0; }
.strip { height: 21px; flex: none; border-top: 1px solid #ddd; display: flex; align-items: center; padding: 0 5px 0 12px; color: #444; }
.cells { flex: 1; height: 17px; margin-left: 11px; display: flex; gap: 1px; }
.cells button { flex: 1; min-width: 0; }

.rail { width: 43px; flex: none; border: solid #ccc; border-width: 0 1px; display: flex; flex-direction: column; gap: 12px; color: #444; overflow: hidden; }
.rail button { height: 43px; }
.rail .fold { height: 38px; margin-bottom: -11px; color: #777; }
.rail .on { background: #0a80ff; color: #fff; }

.themes { width: 352px; flex: none; display: flex; flex-direction: column; min-height: 0; }
.themes h2 { height: 39px; background: #e0e0e0; font-size: 17px; font-weight: 700; color: #111; display: grid; place-items: center; flex: none; }
.tscroll { padding: 19px 15px 0 18px; }
.tbody .track i { height: 274px; }
.top { display: flex; gap: 31px; height: 160px; }
.preview { background: #fff; border: 1px solid #ddd; box-sizing: content-box; flex: none; }
.t1 { font-size: 16px; fill: #222; }
.t2 { font-size: 18px; fill: #555; }
.props { display: flex; flex-direction: column; margin-top: -2px; }
.props button { height: 41px; gap: 16px; justify-content: flex-start; color: #444; }
.ttabs { display: grid; grid-template-columns: repeat(4, 1fr); margin-top: 20px; }
.ttabs button { height: 75px; flex-direction: column; gap: 14px; padding-bottom: 3px; color: #444; }
.ttabs span { color: #111; }
.ttabs .on { background: #dfdfdf; }
.cards { display: grid; grid-template-columns: 150px 150px; gap: 6px; margin-top: 24px; }
.cards button { border: 1px solid #ddd; background: #fff; height: 122px; overflow: hidden; }
.cards svg { flex: none; display: block; }
.cards .on { border-width: 3px; }

footer { height: 42px; flex: none; border-top: 1px solid #dcdcdc; display: flex; align-items: center; color: #444; }
footer button { width: 24px; }
.pg { margin-left: 24px; }
footer .pagesel { width: 129px; justify-content: space-between; margin-left: 27px; color: #111; }
footer .caret { color: #777; }
.vsep { width: 1px; height: 30px; background: #ddd; margin-left: 6px; }
footer .cur { width: 30px; margin: 0 38px 0 34px; font-weight: 700; color: #111; }
.zoombar { margin-left: auto; display: flex; align-items: center; padding-right: 34px; }
.zoombar button:nth-child(2) { margin-left: 6px; }
.zoombar input { appearance: none; width: 102px; height: 16px; margin: 0 3px; background: linear-gradient(90deg, #bbb 15px, #ddd 15px) center / 100% 4px no-repeat; }
.zoombar input::-webkit-slider-thumb { appearance: none; width: 13px; height: 13px; border-radius: 50%; border: 1px solid #aaa; background: #fff; }
.zoombar .pct { width: auto; gap: 9px; margin: 0 19px 0 14px; color: #111; }
.zoombar button:last-child { margin-left: 5px; }
</style>
